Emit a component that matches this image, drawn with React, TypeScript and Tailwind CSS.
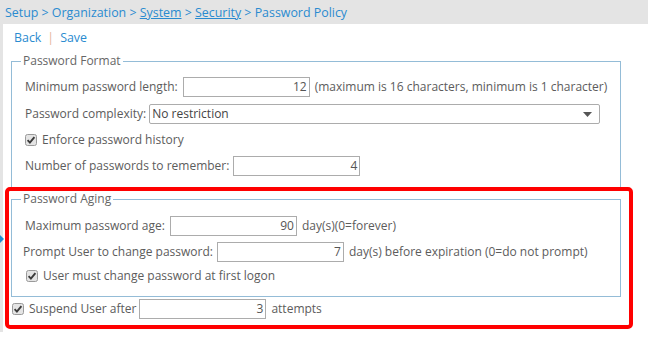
import React from "react";

function Check({ className = "" }: { className?: string }) {
  return (
    <svg className={className} width="12" height="12" viewBox="0 0 12 12">
      <rect x="0.5" y="0.5" width="11" height="11" rx="2" fill="#e4e4e4" stroke="#9a9a9a" />
      <path d="M2.6 6.2 L4.9 8.6 L9.4 3.2" stroke="#3a3a3a" strokeWidth="1.9" fill="none" />
    </svg>
  );
}

function Field({ value, className = "" }: { value: string; className?: string }) {
  return (
    <div
      className={
        "w-[127px] h-[20px] shrink-0 border border-[#acacac] text-right pr-[2px] leading-[18px] text-[#555] " +
        className
      }
    >
      {value}
    </div>
  );
}

export default function App() {
  return (
    <div className="relative w-[648px] h-[342px] bg-white overflow-hidden font-['Open_Sans',sans-serif] text-[12px] text-[#5c5c5c]">
      <div className="h-[24px] bg-[#e4e4e4] pl-[5px] leading-[25px] text-[12.4px] text-[#2a8bd0] whitespace-nowrap">
        Setup &gt; Organization &gt; <span className="underline">System</span> &gt;{" "}
        <span className="underline">Security</span> &gt; Password Policy
      </div>
      <div className="flex">
        <div className="w-[3px] h-[308px] bg-[#e4e4e4]" />
        <div className="flex-1">
          <div className="pt-[4px] pl-[11px] h-[22px] leading-[19px] text-[12.4px] text-[#2a8bd0] flex">
            <span>Back</span>
            <span className="ml-[6px] text-[#e6b59a]">|</span>
            <span className="ml-[6px]">Save</span>
          </div>

          <fieldset className="ml-[8px] mt-[8px] w-[610px] border border-[#94bcd7]">
            <legend className="ml-[9px] px-[2px] leading-[14px] text-[#666]">Password Format</legend>
            <div className="pl-[13px] pb-[13px]">
              <div className="mt-[9px] h-[20px] flex items-center whitespace-nowrap">
                <span>Minimum password length:</span>
                <Field className="ml-[5px]" value="12" />
                <span className="ml-[5px]">(maximum is 16 characters, minimum is 1 character)</span>
              </div>
              <div className="mt-[7px] h-[20px] flex items-center whitespace-nowrap">
                <span>Password complexity:</span>
                <div className="ml-[3px] relative w-[451px] h-[20px] border border-[#acacac] rounded-[2px] pl-[2px] leading-[18px] text-[#444]">
                  No restriction
                  <svg className="absolute right-[7px] top-[7px]" width="9" height="5" viewBox="0 0 9 5">
                    <path d="M0 0 H9 L4.5 5 Z" fill="#555" />
                  </svg>
                </div>
              </div>
              <div className="mt-[6px] h-[20px] flex items-center whitespace-nowrap">
                <Check />
                <span className="ml-[5px]">Enforce password history</span>
              </div>
              <div className="mt-[6px] h-[20px] flex items-center whitespace-nowrap">
                <span>Number of passwords to remember:</span>
                <Field className="ml-[4px]" value="4" />
              </div>
            </div>
          </fieldset>

          <div className="ml-[2px] -mt-[3px] w-[628px] border-4 border-[#ff0000] rounded-[5px] pb-[6px]">
            <fieldset className="ml-[2px] mt-[1px] w-[610px] border border-[#94bcd7]">
              <legend className="ml-[9px] px-[2px] leading-[14px] text-[#666]">Password Aging</legend>
              <div className="pl-[11px] pb-[10px]">
                <div className="mt-[10px] pl-[2px] h-[20px] flex items-center whitespace-nowrap">
                  <span>Maximum password age:</span>
                  <Field className="ml-[5px]" value="90" />
                  <span className="ml-[5px]">day(s)(0=forever)</span>
                </div>
                <div className="mt-[6px] h-[20px] flex items-center whitespace-nowrap">
                  <span>Prompt User to change password:</span>
                  <Field className="ml-[4px]" value="7" />
                  <span className="ml-[5px]">day(s) before expiration (0=do not prompt)</span>
                </div>
                <div className="mt-[4px] pl-[3px] h-[20px] flex items-center whitespace-nowrap">
                  <Check />
                  <span className="ml-[5px]">User must change password at first logon</span>
                </div>
              </div>
            </fieldset>
            <div className="mt-[2px] pl-[3px] h-[20px] flex items-center whitespace-nowrap">
              <Check />
              <span className="ml-[5px]">Suspend User after</span>
              <Field className="ml-[3px]" value="3" />
              <span className="ml-[5px]">attempts</span>
            </div>
          </div>
        </div>
      </div>
      <div className="absolute left-0 top-[235px] w-0 h-0 border-y-[4px] border-y-transparent border-l-[4px] border-l-[#1b8fd3]" />
    </div>
  );
}
